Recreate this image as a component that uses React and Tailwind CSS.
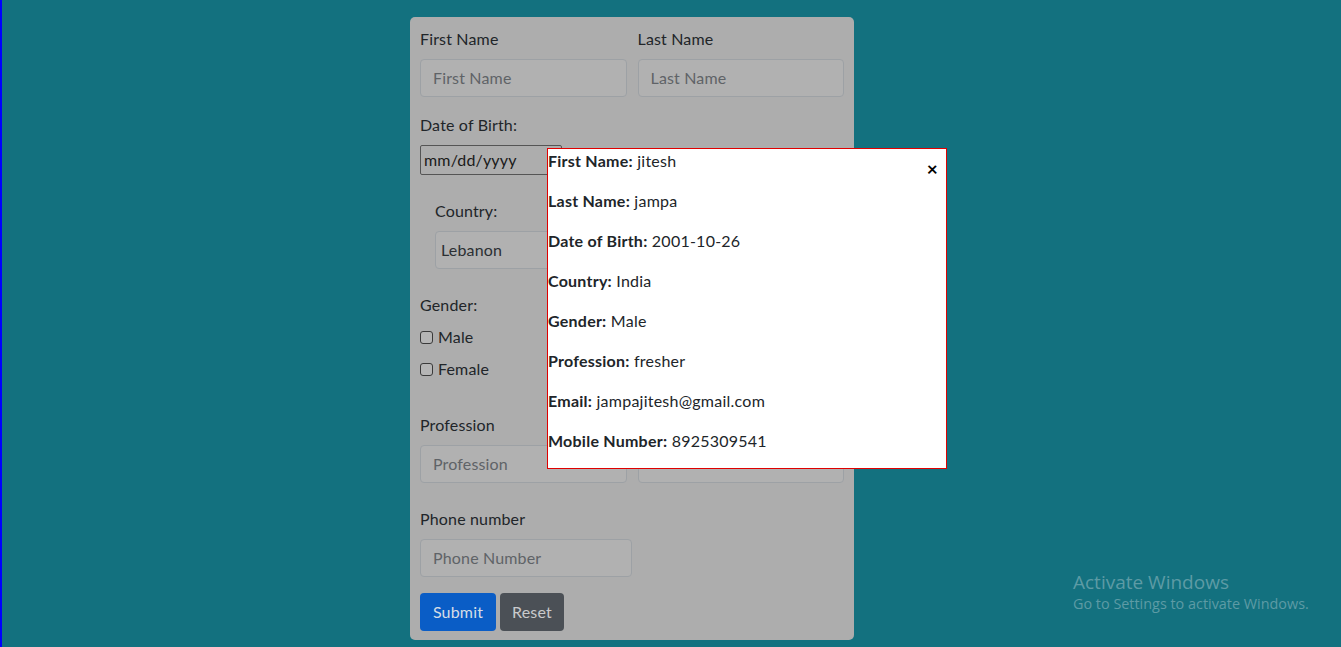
import React from "react";

// Registration form with the submitted-details popup open over it.
const details = [
  ["First Name:", "jitesh"],
  ["Last Name:", "jampa"],
  ["Date of Birth:", "2001-10-26"],
  ["Country:", "India"],
  ["Gender:", "Male"],
  ["Profession:", "fresher"],
  ["Email:", "jampajitesh@gmail.com"],
  ["Mobile Number:", "8925309541"],
];

const Label = ({ children, className = "" }) => (
  <label className={`block h-6 leading-6 mb-2 text-[#212529] ${className}`}>{children}</label>
);

const TextBox = ({ placeholder, className = "px-3 text-[#5f6367]" }) => (
  <div
    className={`h-[38px] flex items-center rounded-[4px] border border-[#9da1a5] bg-[#b1b1b1] ${className}`}
  >
    {placeholder}
  </div>
);

const CheckRow = ({ label }) => (
  <div className="h-6 flex items-center">
    <span className="w-[13px] h-[13px] border border-[#3a3a3a] rounded-[3px] bg-[#b5b5b5]" />
    <span className="ml-[5px] text-[#212529]">{label}</span>
  </div>
);

const App = () => {
  return (
    <div
      className="relative w-full h-[647px] bg-[#13717f] overflow-hidden border-l-2 border-[#0000ff]"
      style={{ fontFamily: "Lato, 'Liberation Sans', sans-serif" }}
    >
      <div className="flex justify-center pt-[17px] pr-[79px]">
        <div className="w-[444px] bg-[#adadad] rounded-[5px] px-[10px] pt-[10px] pb-[9px] text-base tracking-[0.01em]">
          <div className="flex gap-[11px]">
            <div className="flex-1">
              <Label>First Name</Label>
              <TextBox placeholder="First Name" />
            </div>
            <div className="flex-1">
              <Label>Last Name</Label>
              <TextBox placeholder="Last Name" />
            </div>
          </div>

          <div className="mt-4">
            <Label>Date of Birth:</Label>
            <div className="w-[142px] h-[30px] flex items-center justify-between pl-[3px] pr-[2px] border border-[#555] rounded-[2px] bg-[#adadad] text-[#1a1a1a]">
              <span>mm/dd/yyyy</span>
              <svg width="12" height="14" viewBox="0 0 12 14">
                <rect x="1" y="2" width="10" height="11" rx="1" fill="none" stroke="#111" strokeWidth="1.6" />
                <rect x="1" y="2" width="10" height="3" fill="#111" />
              </svg>
            </div>
          </div>

          <div className="mt-6 pl-[15px] w-[207px]">
            <Label>Country:</Label>
            <TextBox placeholder="Lebanon" className="px-[5px] text-[#2b2f33]" />
          </div>

          <div className="mt-6">
            <Label>Gender:</Label>
            <div className="flex flex-col gap-2">
              <CheckRow label="Male" />
              <CheckRow label="Female" />
            </div>
          </div>

          <div className="mt-8 flex gap-[11px]">
            <div className="flex-1">
              <Label>Profession</Label>
              <TextBox placeholder="Profession" />
            </div>
            <div className="flex-1">
              <Label>&nbsp;</Label>
              <TextBox placeholder="" />
            </div>
          </div>

          <div className="mt-6">
            <Label>Phone number</Label>
            <div className="w-[212px]">
              <TextBox placeholder="Phone Number" />
            </div>
          </div>

          <div className="mt-4 flex gap-1">
            <button className="h-[38px] w-[76px] rounded-[4px] bg-[#0a5dc6] text-[#d6dde6]">Submit</button>
            <button className="h-[38px] w-[64px] rounded-[4px] bg-[#4b5056] text-[#c9cacc]">Reset</button>
          </div>
        </div>
      </div>

      <div className="absolute left-[545px] top-[148px] w-[400px] h-[321px] bg-white border border-[#e00000] text-base text-[#212529] tracking-[0.015em]">
        {details.map(([k, v]) => (
          <p key={k} className="h-6 leading-6 mb-4">
            <b className="font-bold">{k}</b> {v}
          </p>
        ))}
        <span className="absolute right-[8px] top-[10px] text-[19px] font-bold leading-none text-black">×</span>
      </div>

      <div className="absolute left-[1071px] top-[570px] text-[#5d9ba5]" style={{ fontFamily: "'Open Sans', sans-serif" }}>
        <div className="text-[19px] leading-6">Activate Windows</div>
        <div className="text-[14.4px] leading-5">Go to Settings to activate Windows.</div>
      </div>
    </div>
  );
};

export default App;
